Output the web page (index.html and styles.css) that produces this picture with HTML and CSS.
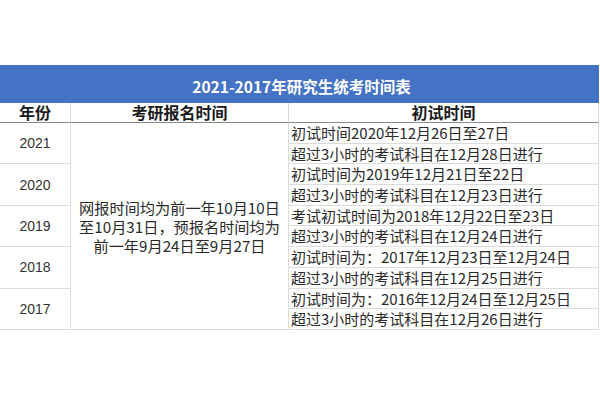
FILE: index.html
```html
<!DOCTYPE html>
<html lang="zh-CN">
<head>
<meta charset="utf-8">
<link rel="stylesheet" href="styles.css">
</head>
<body>
<div class="page">
  <div class="sheet">
    <div class="title">2021-2017年研究生统考时间表</div>
    <div class="hd">年份</div>
    <div class="hd">考研报名时间</div>
    <div class="hd">初试时间</div>

    <div class="year y1">2021</div>
    <div class="year y2">2020</div>
    <div class="year y3">2019</div>
    <div class="year y4">2018</div>
    <div class="year y5">2017</div>

    <div class="reg">
      <span class="reg-line">网报时间均为前一年10月10日</span>
      <span class="reg-line">至10月31日，预报名时间均为</span>
      <span class="reg-line">前一年9月24日至9月27日</span>
    </div>

    <div class="info">初试时间2020年12月26日至27日</div>
    <div class="info">超过3小时的考试科目在12月28日进行</div>
    <div class="info">初试时间为2019年12月21日至22日</div>
    <div class="info">超过3小时的考试科目在12月23日进行</div>
    <div class="info">考试初试时间为2018年12月22日至23日</div>
    <div class="info">超过3小时的考试科目在12月24日进行</div>
    <div class="info">初试时间为：2017年12月23日至12月24日</div>
    <div class="info">超过3小时的考试科目在12月25日进行</div>
    <div class="info">初试时间为：2016年12月24日至12月25日</div>
    <div class="info">超过3小时的考试科目在12月26日进行</div>
  </div>
</div>
</body>
</html>
```

FILE: styles.css
```css
* { box-sizing: border-box; }
html, body { margin: 0; padding: 0; background: #fff; }
body { width: 600px; height: 400px; overflow: hidden; font-family: "Noto Sans CJK SC", "Liberation Sans", sans-serif; color: #222; }
.page { padding-top: 65px; }
.sheet {
  display: grid;
  width: 599px;
  grid-template-columns: 71px 218px 310px;
  grid-template-rows: 38px 20px repeat(10, 20.7px);
}
.title {
  grid-column: 1 / 4;
  background: #4472c4;
  color: #fff;
  font-weight: bold;
  font-size: 15.5px;
  line-height: 20px;
  display: flex;
  align-items: center;
  justify-content: center;
  padding-top: 4px;
  padding-left: 4px;
}
.hd {
  font-weight: bold;
  font-size: 16px;
  line-height: 19px;
  text-align: center;
  border-right: 1px solid #d8d8d8;
  border-bottom: 1px solid #8a8a8a;
  color: #1a1a1a;
}
.year {
  grid-column: 1;
  display: flex;
  align-items: center;
  justify-content: center;
  font-family: "Liberation Sans", sans-serif;
  font-size: 14px;
  color: #333;
  border-right: 1px solid #dcdcdc;
  border-bottom: 1px solid #dcdcdc;
}
.y1 { grid-row: 3 / 5; }
.y2 { grid-row: 5 / 7; }
.y3 { grid-row: 7 / 9; }
.y4 { grid-row: 9 / 11; }
.y5 { grid-row: 11 / 13; }
.reg {
  grid-column: 2;
  grid-row: 3 / 13;
  display: flex;
  flex-direction: column;
  align-items: center;
  justify-content: center;
  text-align: center;
  font-size: 15.2px;
  color: #2a2a2a;
  border-right: 1px solid #dcdcdc;
  border-bottom: 1px solid #dcdcdc;
  padding-top: 2px;
}
.reg-line {
  display: block;
  line-height: 19px;
  white-space: nowrap;
}
.info {
  grid-column: 3;
  font-size: 15px;
  line-height: 19px;
  padding-left: 2px;
  white-space: nowrap;
  color: #2a2a2a;
  border-right: 1px solid #d8d8d8;
  border-bottom: 1px solid #dcdcdc;
}
```
